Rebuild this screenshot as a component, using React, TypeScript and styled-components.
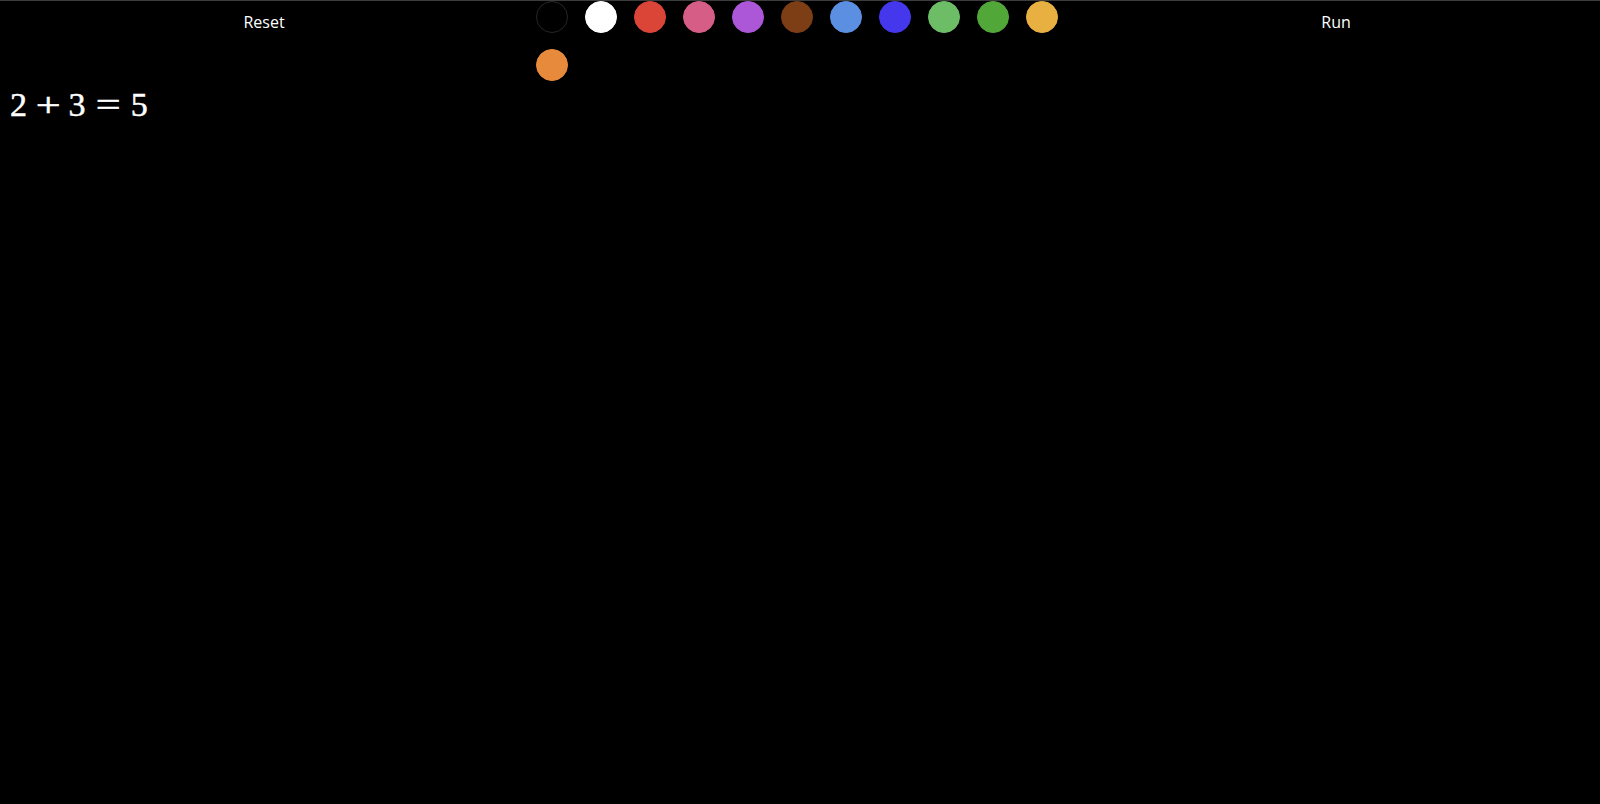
import React from "react";
import styled, { createGlobalStyle } from "styled-components";

const Global = createGlobalStyle`
  html, body { margin: 0; padding: 0; background: #000; }
  body { font-family: "Open Sans", "Noto Sans", sans-serif; color: #fff; }
`;

const Page = styled.div`
  min-height: 804px;
  box-sizing: border-box;
  background: #000;
  border-top: 1px solid #3c3c3c;
`;

const Toolbar = styled.div`
  display: grid;
  grid-template-columns: 528px 544px 1fr;
  align-items: start;
`;

const TextButton = styled.button`
  background: transparent;
  border: none;
  color: #fff;
  font-family: "Open Sans", "Noto Sans", sans-serif;
  font-size: 16px;
  line-height: 22px;
  padding: 10px 0 0;
  margin: 0;
  text-align: center;
  cursor: pointer;
`;

const Palette = styled.div`
  display: flex;
  flex-wrap: wrap;
  column-gap: 17px;
  row-gap: 16px;
  padding-left: 8px;
`;

const Swatch = styled.div<{ $color: string }>`
  width: 32px;
  height: 32px;
  box-sizing: border-box;
  border-radius: 50%;
  background: ${(p) => p.$color};
  border: 1px solid ${(p) => (p.$color === "#000000" ? "#262626" : p.$color)};
  cursor: pointer;
`;

const MathLine = styled.div`
  margin: 4px 0 0 10px;
  font-family: "Liberation Serif", "DejaVu Serif", serif;
  font-size: 34px;
  line-height: 40px;
  color: #fff;
  -webkit-text-stroke: 0.5px #fff;
  display: flex;
  align-items: baseline;
`;

const Glyph = styled.span<{ $w: number; $gap?: number; $stretch?: number }>`
  display: inline-block;
  width: ${(p) => p.$w}em;
  margin-right: ${(p) => p.$gap ?? 0}em;
  text-align: center;
  transform: scaleX(${(p) => p.$stretch ?? 1});
`;

const colors = [
  "#000000",
  "#ffffff",
  "#da4538",
  "#d55d86",
  "#ac56d8",
  "#7d3d15",
  "#5a8fe1",
  "#4437ec",
  "#6cbd65",
  "#52a739",
  "#e8b041",
  "#e88a3b",
];

export default function App() {
  return (
    <>
      <Global />
      <Page>
        <Toolbar>
          <TextButton>Reset</TextButton>
          <Palette>
            {colors.map((c) => (
              <Swatch key={c} $color={c} />
            ))}
          </Palette>
          <TextButton>Run</TextButton>
        </Toolbar>
        <MathLine>
          <Glyph $w={0.5} $gap={0.222}>2</Glyph>
          <Glyph $w={0.778} $gap={0.222} $stretch={1.3}>+</Glyph>
          <Glyph $w={0.5} $gap={0.278}>3</Glyph>
          <Glyph $w={0.778} $gap={0.278} $stretch={1.3}>=</Glyph>
          <Glyph $w={0.5}>5</Glyph>
        </MathLine>
      </Page>
    </>
  );
}
